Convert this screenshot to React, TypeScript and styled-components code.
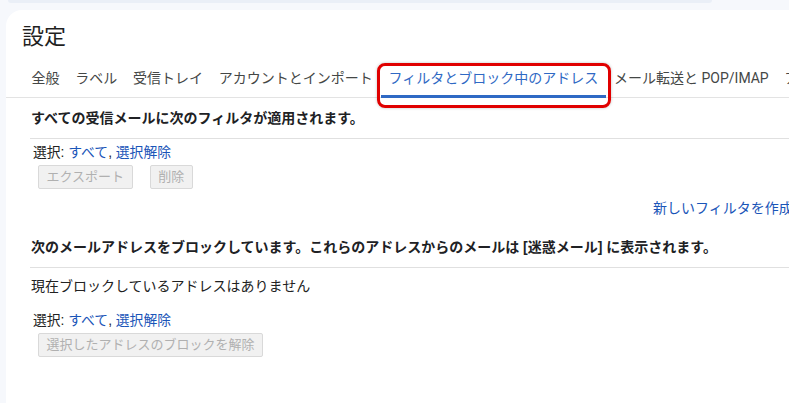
import * as React from 'react';
import styled, { createGlobalStyle, css } from 'styled-components';

const GlobalStyle = createGlobalStyle`
  html, body {
    margin: 0;
    padding: 0;
    background: #f6f8fc;
    overflow: hidden;
  }
  body {
    font-family: Roboto, "Noto Sans CJK JP", sans-serif;
    color: #202124;
  }
`;

const tabs = [
  '全般',
  'ラベル',
  '受信トレイ',
  'アカウントとインポート',
  'フィルタとブロック中のアドレス',
  'メール転送と POP/IMAP',
  'アドオン',
];

const App: React.FC = () => {
  return (
    <>
      <GlobalStyle />
      <Page>
        <SearchEdge />
        <Panel>
          <Title>設定</Title>
          <TabBar>
            {tabs.map((t, i) => (
              <Tab key={t} active={i === 4}>
                {t}
                {i === 4 && <Highlight />}
              </Tab>
            ))}
          </TabBar>
          <Content>
            <Heading>すべての受信メールに次のフィルタが適用されます。</Heading>
            <Divider />
            <SelectRow>
              選択: <Link>すべて</Link>, <Link>選択解除</Link>
            </SelectRow>
            <ButtonRow>
              <Button disabled>エクスポート</Button>
              <Button disabled>削除</Button>
            </ButtonRow>
            <RightLink>
              <Link>新しいフィルタを作成</Link>
            </RightLink>
            <Heading spaced>
              次のメールアドレスをブロックしています。これらのアドレスからのメールは [迷惑メール] に表示されます。
            </Heading>
            <Divider />
            <Plain>現在ブロックしているアドレスはありません</Plain>
            <SelectRow second>
              選択: <Link>すべて</Link>, <Link>選択解除</Link>
            </SelectRow>
            <ButtonRow>
              <Button disabled>選択したアドレスのブロックを解除</Button>
            </ButtonRow>
          </Content>
        </Panel>
      </Page>
    </>
  );
};

const Page = styled.div`
  width: 789px;
  height: 403px;
  display: flex;
  flex-direction: column;
`;

const SearchEdge = styled.div`
  width: 704px;
  height: 3px;
  margin-left: 8px;
  background: #eaeff7;
  border-radius: 0 0 24px 24px;
  flex-shrink: 0;
`;

const Panel = styled.div`
  flex: 1;
  margin-top: 7px;
  margin-left: 6px;
  background: #fff;
  border-top-left-radius: 16px;
  display: flex;
  flex-direction: column;
  overflow: hidden;
`;

const Title = styled.h1`
  margin: 0;
  padding: 13px 0 0 16px;
  font-size: 22px;
  line-height: 28px;
  font-weight: 400;
  color: #1f1f1f;
`;

const TabBar = styled.div`
  display: flex;
  margin-top: 11px;
  padding-left: 17.5px;
  border-bottom: 1px solid #e3e3e3;
  white-space: nowrap;
`;

const Tab = styled.div<{ active?: boolean }>`
  position: relative;
  flex-shrink: 0;
  padding: 6px 7.9px 7px;
  font-size: 14px;
  line-height: 20px;
  color: #444746;
  border-bottom: 3px solid transparent;
  margin-bottom: -1px;
  ${p =>
    p.active &&
    css`
      color: #2f69c4;
      border-bottom-color: #2f69c4;
    `}
`;

const Highlight = styled.span`
  position: absolute;
  left: -4px;
  right: -5px;
  top: 1px;
  bottom: -13px;
  border: 3px solid #e00000;
  border-radius: 8px;
  box-shadow: 0 0 3px rgba(0, 0, 0, 0.25);
  pointer-events: none;
`;

const Content = styled.div`
  padding-left: 24px;
  font-family: "Liberation Sans", Arial, "Noto Sans CJK JP", sans-serif;
  font-size: 14px;
  color: #222;
`;

const Heading = styled.div<{ spaced?: boolean }>`
  margin-top: ${p => (p.spaced ? '9px' : '0')};
  padding: 10px 0 10px 1px;
  font-weight: 700;
  line-height: 20px;
  white-space: nowrap;
  color: #202124;
`;

const Divider = styled.div`
  height: 1px;
  background: #e0e0e0;
`;

const SelectRow = styled.div<{ second?: boolean }>`
  margin-top: ${p => (p.second ? '15px' : '4px')};
  padding-left: 3px;
  line-height: 20px;
  font-size: 13.8px;
`;

const Link = styled.span`
  color: #1a55b8;
  cursor: pointer;
`;

const ButtonRow = styled.div`
  display: flex;
  gap: 17px;
  padding-left: 8px;
  margin-top: 2px;
`;

const Button = styled.button`
  font-family: inherit;
  font-size: 13px;
  height: 24px;
  padding: 0 7.5px;
  border: 1px solid #d9d9d9;
  border-radius: 2px;
  background: #f1f1f1;
  color: #b0b0b0;
  line-height: 20px;
`;

const RightLink = styled.div`
  margin-top: 9px;
  padding-left: 623px;
  line-height: 20px;
  white-space: nowrap;
`;

const Plain = styled.div`
  margin-top: 8px;
  line-height: 20px;
  padding-left: 1px;
`;

export default App;
